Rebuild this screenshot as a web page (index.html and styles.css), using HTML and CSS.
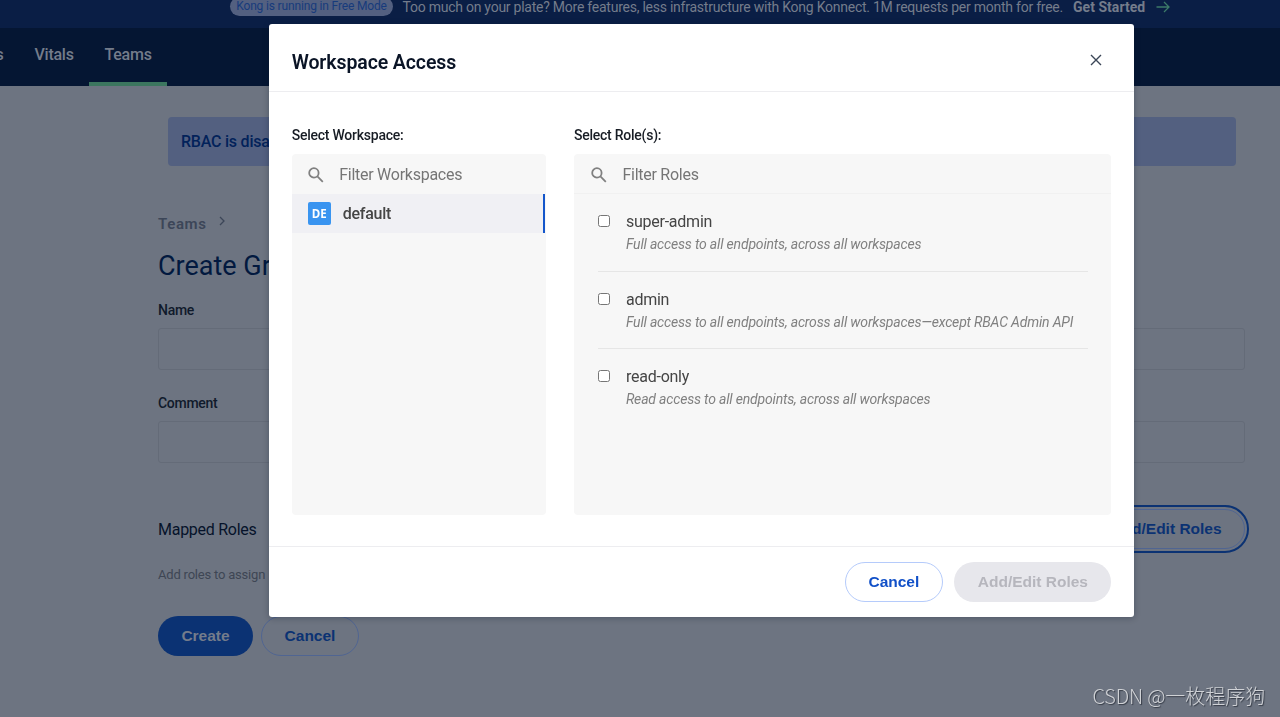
FILE: index.html
```html
<!DOCTYPE html>
<html lang="en">
<head>
<meta charset="utf-8">
<title>Create Group</title>
<link rel="stylesheet" href="styles.css">
</head>
<body>
<div class="page">
  <div class="banner">
    <span class="pill">Kong is running in Free Mode</span>
    <span class="banner-text">Too much on your plate? More features, less infrastructure with Kong Konnect. 1M requests per month for free.</span>
    <a class="banner-link">Get Started</a>
    <svg class="banner-arrow" width="14" height="12" viewBox="0 0 14 12"><path d="M.5 6h12M8 1l5 5-5 5"/></svg>
  </div>
  <nav class="nav">
    <a class="tab tab-cut">s</a>
    <a class="tab">Vitals</a>
    <a class="tab active">Teams</a>
  </nav>
  <main class="content">
    <div class="notice">RBAC is disabled</div>
    <div class="crumbs"><span>Teams</span><svg width="6" height="10" viewBox="0 0 6 10"><path d="M1 1l4 4-4 4"/></svg></div>
    <h1 class="title">Create Group</h1>
    <label class="label">Name</label>
    <div class="field"></div>
    <label class="label">Comment</label>
    <div class="field"></div>
    <div class="mapped">
      <span>Mapped Roles</span>
      <button class="btn outline focused">Add/Edit Roles</button>
    </div>
    <p class="hint">Add roles to assign</p>
    <div class="actions">
      <button class="btn primary">Create</button>
      <button class="btn outline">Cancel</button>
    </div>
  </main>
</div>

<section class="modal">
  <header class="modal-head">
    <h2 class="modal-title">Workspace Access</h2>
    <svg class="close" width="12" height="12" viewBox="0 0 12 12"><path d="M1 1l10 10M11 1L1 11"/></svg>
  </header>
  <div class="modal-body">
    <div class="column workspaces">
      <h3 class="column-title">Select Workspace:</h3>
      <div class="panel">
        <div class="search">
          <svg width="16" height="16" viewBox="0 0 16 16"><circle cx="5.9" cy="5.9" r="4.7"/><path d="M9.4 9.4l5.4 5.4"/></svg>
          <span>Filter Workspaces</span>
        </div>
        <div class="workspace"><span class="avatar">DE</span><span class="workspace-name">default</span></div>
      </div>
    </div>
    <div class="column roles">
      <h3 class="column-title">Select Role(s):</h3>
      <div class="panel">
        <div class="search search-line">
          <svg width="16" height="16" viewBox="0 0 16 16"><circle cx="5.9" cy="5.9" r="4.7"/><path d="M9.4 9.4l5.4 5.4"/></svg>
          <span>Filter Roles</span>
        </div>
        <div class="role-list">
          <div class="role"><span class="check"></span><div><div class="role-name">super-admin</div><div class="role-desc">Full access to all endpoints, across all workspaces</div></div></div>
          <div class="role"><span class="check"></span><div><div class="role-name">admin</div><div class="role-desc">Full access to all endpoints, across all workspaces—except RBAC Admin API</div></div></div>
          <div class="role"><span class="check"></span><div><div class="role-name">read-only</div><div class="role-desc">Read access to all endpoints, across all workspaces</div></div></div>
        </div>
      </div>
    </div>
  </div>
  <footer class="modal-foot">
    <button class="btn modal-cancel">Cancel</button>
    <button class="btn disabled">Add/Edit Roles</button>
  </footer>
</section>
<div class="watermark"><span class="watermark-latin">CSDN @</span>一枚程序狗</div>
</body>
</html>
```
FILE: styles.css
```css
* { box-sizing: border-box; }
body { margin: 0; font-family: Roboto, sans-serif; background: #6d7481; }
h1, h2, h3, p { margin: 0; }
svg { fill: none; flex: none; }
.page { width: 1280px; height: 717px; overflow: hidden; }

.banner { height: 28px; background: #0a1e45; display: flex; align-items: flex-start; padding-left: 230px; color: #747c8b; white-space: nowrap; }
.pill { width: 163px; height: 19px; margin-top: -3px; padding-top: 3px; border-radius: 9.5px; background: #536080; color: #173b7c; font-size: 12px; line-height: 13px; text-align: center; letter-spacing: -.16px; }
.banner-text { width: 661px; margin-left: 9.5px; font-size: 14px; line-height: 14px; letter-spacing: -.245px; }
.banner-link { width: 74px; margin-left: 9.5px; font-size: 14px; line-height: 14px; font-weight: 700; letter-spacing: .03px; }
.banner-arrow { margin: 1px 0 0 9px; stroke: #3c7a68; stroke-width: 1.3; }

.nav { height: 58px; background: #051633; display: flex; color: #747c8b; }
.tab { height: 58px; line-height: 54px; font-size: 16px; font-weight: 500; letter-spacing: -.25px; width: 69px; padding-left: 14.5px; white-space: nowrap; }
.tab-cut { width: 20px; padding-left: 0; text-indent: -4.5px; }
.tab.active { width: 78px; padding-left: 15.5px; border-bottom: 4px solid #3c765f; }

.content { width: 1087px; margin-left: 158px; padding-top: 31px; }
.notice { width: 1068px; height: 49px; margin-left: 10px; padding-left: 13px; border-radius: 4px; background: #536080; color: #02225a; font-size: 16px; font-weight: 500; line-height: 49px; letter-spacing: -.22px; }
.crumbs { margin-top: 48px; height: 20px; display: flex; color: #3c4658; font-size: 15px; line-height: 20px; font-weight: 600; letter-spacing: .65px; }
.crumbs svg { margin: 2px 0 0 12px; stroke: #3c4658; stroke-width: 1.3; }
.title { margin-top: 15px; font-size: 27px; line-height: 34px; font-weight: 400; color: #02193f; }
.label { display: block; margin-top: 18px; height: 18px; font-size: 14px; letter-spacing: -.28px; line-height: 19px; font-weight: 500; color: #101a2b; }
.field { height: 42px; margin-top: 9px; border: 1px solid #646b78; border-radius: 3px; }
.field + .label { margin-top: 24px; }
.mapped { display: flex; justify-content: space-between; align-items: center; height: 40px; margin-top: 46px; font-size: 16px; letter-spacing: -.27px; color: #06132a; }
.hint { margin-top: 17px; font-size: 13px; line-height: 18px; color: #3e4654; letter-spacing: -.2px; }
.actions { display: flex; gap: 8px; margin-top: 32px; }

.btn { height: 40px; border-radius: 20px; border: 1px solid transparent; font-family: "Liberation Sans", Arial, sans-serif; font-size: 15.5px; font-weight: 700; padding: 0; white-space: nowrap; }
.primary { width: 95px; background: #0b3273; color: #747c8b; }
.outline { width: 98px; background: transparent; border-color: #506592; color: #0b3273; }
.focused { width: 157px; outline: 2px solid #0b3273; outline-offset: 2px; }

.modal { position: fixed; left: 268.7px; top: 24.4px; width: 865.7px; height: 592.4px; background: #fff; border-radius: 3px; box-shadow: 0 1px 6px rgba(5, 15, 35, .3); color: #0a1426; }
.modal-head { height: 68px; padding: 0 32px 0 23px; border-bottom: 1px solid #ededf0; display: flex; justify-content: space-between; align-items: center; }
.modal-title { font-size: 19.5px; line-height: 26px; font-weight: 600; margin-top: 10px; letter-spacing: -.1px; }
.close { margin-top: 4px; stroke: #3b4657; stroke-width: 1.4; }
.modal-body { height: 454px; padding: 33px 23px 0; display: flex; gap: 28px; }
.workspaces { width: 254.5px; }
.roles { width: 538px; }
.column-title { font-size: 14px; letter-spacing: -.24px; line-height: 20px; height: 29px; font-weight: 500; color: #171c24; }
.panel { height: 361px; background: #f7f7f7; border-radius: 4px; overflow: hidden; }
.search { height: 40px; display: flex; align-items: center; gap: 15.5px; padding-left: 16px; font-size: 16px; letter-spacing: -.26px; color: #757575; border-bottom: 1px solid transparent; }
.search svg { stroke: #808080; stroke-width: 1.8; margin-top: 2px; }
.search span { margin-top: 2px; }
.search-line { border-bottom-color: #f1f1f1; padding-left: 17px; }
.workspace { height: 39px; background: #f0f0f4; margin-right: 1px; border-right: 2px solid #1456cb; display: flex; align-items: center; padding-left: 16px; gap: 12px; }
.avatar { width: 23px; height: 23px; border-radius: 2px; background: #3994f0; color: #fff; font: 700 11.5px/23px "Open Sans", sans-serif; text-align: center; }
.workspace-name { font-size: 16px; letter-spacing: -.24px; font-weight: 500; color: #454545; }
.role-list { padding: 0 23.5px 0 24.5px; }
.role { height: 77.5px; border-bottom: 1px solid #e6e6e6; display: flex; padding-top: 17px; gap: 15.5px; white-space: nowrap; }
.role:last-child { border-bottom: 0; }
.check { flex: none; width: 12px; height: 12px; margin-top: 4px; border: 1px solid #767676; border-radius: 2.5px; background: #fff; }
.role-name { font-size: 16px; letter-spacing: -.24px; line-height: 21px; color: #454545; }
.role-desc { margin-top: 2px; font-size: 14px; letter-spacing: -.18px; line-height: 21px; font-style: italic; color: #808080; }
.modal-foot { height: 70px; border-top: 1px solid #ededf0; display: flex; justify-content: flex-end; gap: 11.5px; padding: 15px 23px 0; }
.modal-cancel { width: 98px; background: #fff; border-color: #b5cbfb; color: #1150c8; }
.disabled { width: 157px; background: #e7e7ec; color: #b6b6bd; }

.watermark { position: fixed; left: 1092.5px; top: 682px; font-family: "Noto Sans CJK SC", sans-serif; font-weight: 300; font-size: 20px; line-height: 28px; color: #d0d2d6; white-space: nowrap; text-shadow: 1px 1px 1px #343a45; }
.watermark-latin { letter-spacing: -.2px; }
```
